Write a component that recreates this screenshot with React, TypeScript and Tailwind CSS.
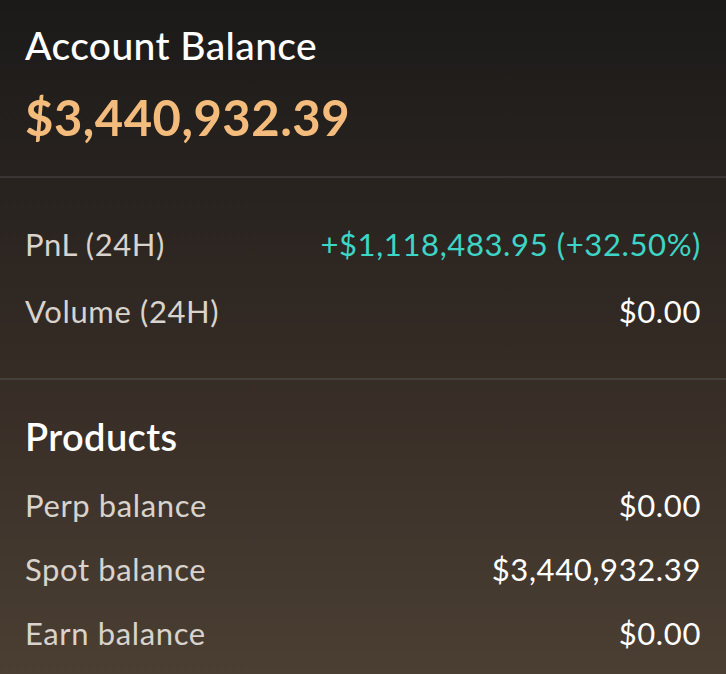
export default function App() {
  const font = { fontFamily: "Lato, 'Noto Sans', sans-serif" };
  const rows = [
    ["Perp balance", "$0.00"],
    ["Spot balance", "$3,440,932.39"],
    ["Earn balance", "$0.00"],
  ];
  return (
    <div
      className="w-[726px] h-[674px] overflow-hidden bg-gradient-to-b from-[#1b1a19] via-[#332a24] to-[#4b3f33] text-white"
      style={font}
    >
      <div className="px-[25px] pt-[22px] pb-[33px]">
        <div className="text-[39px] leading-[46px] font-medium tracking-[0.01em] text-white">Account Balance</div>
        <div className="mt-[23px] text-[49px] leading-[52px] font-bold tracking-[0.01em] text-[#f3bb7c]">$3,440,932.39</div>
      </div>
      <div className="h-[2px] bg-[#3a3633]" />
      <div className="px-[25px] pt-[50px] pb-[51px] flex flex-col gap-[35px]">
        <div className="flex justify-between items-center text-[31px] leading-[32px] tracking-[0.02em]">
          <span className="text-[#d8d3cd]">PnL (24H)</span>
          <span className="text-[#3dd5c6]">+$1,118,483.95 (+32.50%)</span>
        </div>
        <div className="flex justify-between items-center text-[31px] leading-[32px] tracking-[0.02em]">
          <span className="text-[#d8d3cd]">Volume (24H)</span>
          <span className="text-white">$0.00</span>
        </div>
      </div>
      <div className="h-[2px] bg-[#45403a]" />
      <div className="px-[25px] pt-[33px] flex flex-col">
        <div className="text-[38px] leading-[46px] font-semibold tracking-[0.01em] text-white">Products</div>
        <div className="mt-[30px] flex flex-col gap-[32px]">
          {rows.map(([l, v]) => (
            <div key={l} className="flex justify-between items-center text-[31px] leading-[32px] tracking-[0.02em]">
              <span className="text-[#d8d3cd]">{l}</span>
              <span className="text-white">{v}</span>
            </div>
          ))}
        </div>
      </div>
    </div>
  );
}
